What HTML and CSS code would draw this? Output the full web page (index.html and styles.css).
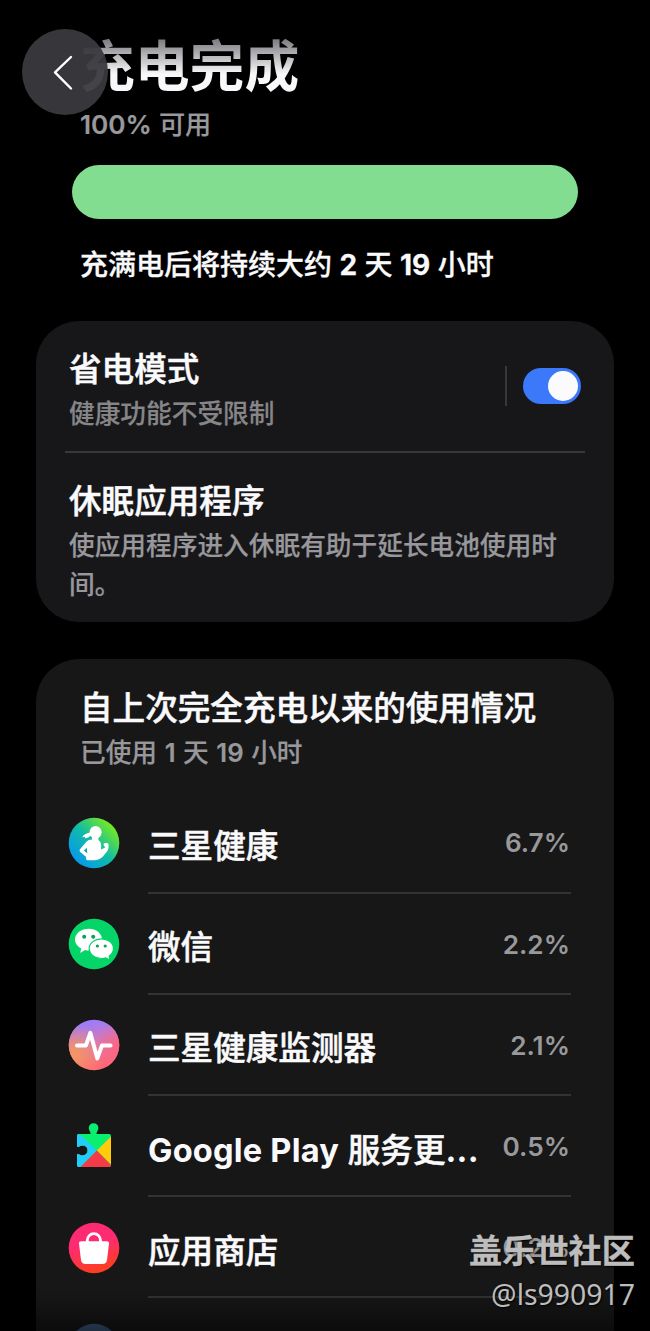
FILE: index.html
```
<!DOCTYPE html>
<html lang="zh-CN">
<head>
    <meta charset="UTF-8">
    <meta name="viewport" content="width=device-width, initial-scale=1.0">
    <title>电池</title>
    <link rel="stylesheet" href="styles.css">
</head>
<body>
    <div class="screen">
        <button class="back" aria-label="返回">
            <svg width="86" height="86" viewBox="0 0 86 86"><path d="M49 28 L33 43.3 L49 59.5" fill="none" stroke="#fff" stroke-width="2.4" stroke-linecap="round" stroke-linejoin="round"/></svg>
        </button>

        <header class="head">
            <h1>充电完成</h1>
            <p class="percent"><b>100%</b> 可用</p>
            <div class="battery"></div>
            <p class="remain">充满电后将持续大约 <b>2</b> 天 <b>19</b> 小时</p>
        </header>

        <section class="card modes">
            <div class="mode">
                <div class="mode_text">
                    <h2>省电模式</h2>
                    <p class="dim">健康功能不受限制</p>
                </div>
                <div class="switch_box"><span class="switch"></span></div>
            </div>
            <div class="mode sleep">
                <div class="mode_text">
                    <h2>休眠应用程序</h2>
                    <p>使应用程序进入休眠有助于延长电池使用时间。</p>
                </div>
            </div>
        </section>

        <section class="card usage">
            <div class="usage_head">
                <h2>自上次完全充电以来的使用情况</h2>
                <p>已使用 <b>1</b> 天 <b>19</b> 小时</p>
            </div>
            <ul>
                <li>
                    <!-- 三星健康 -->
                    <svg class="icon" viewBox="0 0 52 52">
                        <defs><linearGradient id="g1" x1="0.1" y1="0.85" x2="0.85" y2="0.1"><stop offset="0" stop-color="#0797f0"/><stop offset="0.5" stop-color="#10bca6"/><stop offset="1" stop-color="#7ced18"/></linearGradient></defs>
                        <circle cx="26" cy="26" r="25.3" fill="url(#g1)"/>
                        <g fill="#fff">
                            <ellipse cx="27.6" cy="15.3" rx="6" ry="6.4"/>
                            <path d="M14.2 20.2 Q16.5 15.8 23 15.4 L23 18.6 Q20 21.6 16.8 21.2 L17.2 19.8 Z"/>
                            <path d="M24 20 H30.4 V23 Q33 24.4 33.2 28 L33 32.6 L37.2 30.6 L35.4 27.6 Q36 25.6 38 26 Q40.6 25.6 40.6 28 Q41 31.8 39.4 34 L35 39.5 Q31.4 43.2 26 43.2 H19.8 Q17.4 43 18.2 40 L12 34.8 Q11 33.6 12 32.2 L18.6 24.4 Q20.4 22.6 24 22.6 Z"/>
                        </g>
                        <path fill="#0fa4c0" d="M15.8 33.4 L18.8 30.8 L19.3 36.4 Z"/>
                    </svg>
                    <div class="row"><span class="name">三星健康</span><span class="num">6.7%</span></div>
                </li>
                <li>
                    <!-- 微信 -->
                    <svg class="icon" viewBox="0 0 52 52">
                        <circle cx="26" cy="26" r="25.3" fill="#05d469"/>
                        <path fill="#fff" d="M20.8 10.7 C28.2 10.7 34 15.3 34 21.6 C34 28 28.2 32.5 20.8 32.5 Q18.7 32.5 17 32 L12.2 35 L13.2 30.6 C9.6 28.6 7 25.3 7 21.6 C7 15.3 13.2 10.7 20.8 10.7 Z"/>
                        <path fill="#fff" stroke="#05d469" stroke-width="1.2" d="M33.4 20.8 C40.2 20.8 45.5 25 45.5 30.6 C45.5 33.7 43.7 36.2 41.2 38 L41.7 42 L37.8 39.9 Q35.8 40.5 33.4 40.5 C26.8 40.5 21.2 36.2 21.2 30.6 C21.2 25 26.8 20.8 33.4 20.8 Z"/>
                        <g fill="#0aa35b"><circle cx="16.2" cy="18.8" r="2"/><circle cx="25.2" cy="18.8" r="2"/><circle cx="29.4" cy="28" r="1.6"/><circle cx="37.2" cy="28" r="1.6"/></g>
                    </svg>
                    <div class="row"><span class="name">微信</span><span class="num">2.2%</span></div>
                </li>
                <li>
                    <!-- 三星健康监测器 -->
                    <svg class="icon" viewBox="0 0 52 52">
                        <defs>
                            <linearGradient id="g2" x1="0.4" y1="0" x2="0.6" y2="1"><stop offset="0" stop-color="#987cff"/><stop offset="0.5" stop-color="#d979b4"/><stop offset="0.9" stop-color="#ff6777"/></linearGradient>
                            <radialGradient id="g3" cx="0.1" cy="0.7" r="0.6"><stop offset="0" stop-color="#f5985e"/><stop offset="1" stop-color="#f5985e" stop-opacity="0"/></radialGradient>
                            <radialGradient id="g4" cx="1" cy="0.55" r="0.5"><stop offset="0" stop-color="#fb6480"/><stop offset="1" stop-color="#fb6480" stop-opacity="0"/></radialGradient>
                        </defs>
                        <circle cx="26" cy="26" r="25.3" fill="url(#g2)"/>
                        <circle cx="26" cy="26" r="25.3" fill="url(#g3)"/>
                        <circle cx="26" cy="26" r="25.3" fill="url(#g4)"/>
                        <path d="M9 26.4 H18 L22.3 13.8 L29.3 39.4 L34 26.4 H42.6" fill="none" stroke="#fff" stroke-width="4" stroke-linecap="round" stroke-linejoin="round"/>
                    </svg>
                    <div class="row"><span class="name">三星健康监测器</span><span class="num">2.1%</span></div>
                </li>
                <li>
                    <!-- Google Play 服务 -->
                    <svg class="icon" viewBox="0 0 52 52">
                        <defs><clipPath id="puzzle"><path d="M11 13 H22.4 C23.4 11.5 20.8 10 20.8 7 A4.8 4.8 0 0 1 30.4 7 C30.4 10 27.8 11.5 28.8 13 H41 Q43 13 43 15 V44 Q43 46 41 46 H11 Q9 46 9 44 V33.2 C10.8 32.4 11.7 34.4 14.6 34.4 A5 5 0 0 0 14.6 24.4 C11.7 24.4 10.8 26.4 9 25.6 V15 Q9 13 11 13 Z"/></clipPath></defs>
                        <g clip-path="url(#puzzle)">
                            <rect x="8" y="2" width="36" height="45" fill="#0bef70"/>
                            <path d="M11.5 13 L28.9 29.5 L11.5 47 H8 V13 Z" fill="#22ccfb"/>
                            <path d="M44 14.5 L28.9 29.5 L44 44.5 Z" fill="#ffcb0a"/>
                            <path d="M28.9 29.5 L11.5 47 H46 Z" fill="#f63b48"/>
                        </g>
                    </svg>
                    <div class="row"><span class="name"><b>Google Play</b> 服务更<b>...</b></span><span class="num">0.5%</span></div>
                </li>
                <li>
                    <!-- 应用商店 -->
                    <svg class="icon" viewBox="0 0 52 52">
                        <defs><linearGradient id="g5" x1="0.35" y1="0" x2="0.65" y2="1"><stop offset="0.4" stop-color="#ff2b72"/><stop offset="1" stop-color="#fb4017"/></linearGradient></defs>
                        <circle cx="26" cy="26" r="25.3" fill="url(#g5)"/>
                        <path d="M19.3 21 V18.3 A6.6 6.6 0 0 1 32.5 18.3 V21" fill="none" stroke="#fff" stroke-width="2.8"/>
                        <path d="M13.2 19.2 H38.8 Q41.2 19.2 41 21.6 L39 38 Q38.4 41.9 34.5 41.9 H17.5 Q13.6 41.9 13 38 L11 21.6 Q10.8 19.2 13.2 19.2 Z" fill="#fff"/>
                    </svg>
                    <div class="row"><span class="name">应用商店</span><span class="num">0.2%</span></div>
                </li>
                <li>
                    <svg class="icon" viewBox="0 0 52 52"><circle cx="26" cy="26" r="25.3" fill="#3c5a80"/></svg>
                    <div class="row"></div>
                </li>
            </ul>
        </section>

        <div class="fade"></div>
        <div class="mark">
            <strong>盖乐世社区</strong>
            <span>@ls990917</span>
        </div>
    </div>
</body>
</html>
```
FILE: styles.css
```
* {
    box-sizing: border-box;
    margin: 0;
    padding: 0;
}
body {
    background-color: #000;
    color: #fafafc;
    font-family: Inter, "Noto Sans CJK SC", sans-serif;
}
b {
    font-weight: 700;
}
.screen {
    position: relative;
    width: 650px;
    height: 1331px;
    overflow: hidden;
}
.back {
    position: absolute;
    left: 22px;
    top: 29px;
    z-index: 2;
    width: 86px;
    height: 86px;
    border: 0;
    border-radius: 50%;
    background-color: rgba(58, 57, 61, 0.95);
}
.back svg {
    display: block;
}
.head {
    height: 321px;
    padding: 34px 72px 0;
}
.head h1 {
    height: 64px;
    padding-left: 8px;
    font-size: 54.8px;
    line-height: 64px;
    font-weight: 700;
    /* 顶部渐隐 */
    background: linear-gradient(#77777c 4px, #f8f8fa 40px);
    -webkit-background-clip: text;
    background-clip: text;
    color: transparent;
}
.percent {
    height: 67px;
    padding-left: 8px;
    color: #99989d;
    font-size: 26.2px;
    line-height: 54px;
    font-weight: 500;
    -webkit-text-stroke: 0.2px;
}
.percent b, .usage_head b {
    font-weight: 600;
}
.battery {
    height: 54px;
    border-radius: 27px;
    background-color: #82dd91;
}
.remain {
    padding: 26px 0 0 8px;
    font-size: 28px;
    line-height: 40px;
    font-weight: 500;
    white-space: nowrap;
    -webkit-text-stroke: 0.3px;
}
.card {
    width: 578px;
    margin: 0 auto;
    border-radius: 43px;
    background-color: #17171a;
}
h2 {
    font-size: 32.6px;
    line-height: 48px;
    font-weight: 500;
    white-space: nowrap;
    -webkit-text-stroke: 0.5px;
}
.card p {
    padding-top: 1px;
    color: #98979b;
    font-size: 25.7px;
    line-height: 39px;
    font-weight: 500;
    -webkit-text-stroke: 0.2px;
}
.card p.dim {
    color: #868688;
}
.modes {
    height: 301px;
    padding: 0 29px;
}
.mode {
    display: flex;
    justify-content: space-between;
    align-items: center;
    height: 130px;
    padding: 0 4px;
}
.mode_text {
    padding-top: 5px;
}
.sleep {
    height: 171px;
    border-top: 2px solid #38373c;
}
.sleep .mode_text {
    padding-top: 6px;
}
.switch_box {
    display: flex;
    align-items: center;
    height: 40px;
    padding-left: 16px;
    border-left: 2px solid #38383b;
}
.switch {
    width: 58px;
    height: 36px;
    padding: 3px;
    border-radius: 18px;
    background-color: #3c78fa;
}
.switch::after {
    content: "";
    display: block;
    width: 30px;
    height: 30px;
    margin-left: 22px;
    border-radius: 50%;
    background-color: #fbfbfe;
}
.usage {
    height: 720px;
    margin-top: 37px;
    background-color: #171717;
}
.usage_head {
    height: 133.4px;
    padding: 25px 44px 0;
}
.usage_head p {
    word-spacing: 0.7px;
}
.usage li {
    display: flex;
    align-items: center;
    height: 101.2px;
    padding: 0 43px 0 32px;
    list-style: none;
}
.icon {
    flex: none;
    width: 52px;
    height: 52px;
}
.row {
    display: flex;
    flex: 1;
    justify-content: space-between;
    align-items: center;
    height: 101.2px;
    margin-left: 28px;
    border-bottom: 2px solid #333;
}
.name {
    padding-top: 8px;
    font-size: 32.6px;
    line-height: 48px;
    font-weight: 500;
    white-space: nowrap;
    -webkit-text-stroke: 0.5px;
}
.name b {
    letter-spacing: 0.2px;
    -webkit-text-stroke: 0;
}
.num {
    padding: 2px 1px 0 0;
    color: #99999c;
    font-size: 26.2px;
    font-weight: 600;
}
.fade {
    position: absolute;
    left: 0;
    bottom: 0;
    width: 650px;
    height: 40px;
    background: linear-gradient(transparent, rgba(0, 0, 0, 0.5));
}
.mark {
    position: absolute;
    right: 15px;
    bottom: 16px;
    display: flex;
    flex-direction: column;
    align-items: flex-end;
    color: #bdbdbd;
    font-family: "Noto Sans", "Noto Sans CJK SC", sans-serif;
    text-shadow: 1px 1px 2px #000;
}
.mark strong {
    font-size: 33.2px;
    line-height: 45px;
    -webkit-text-stroke: 0.4px;
}
.mark span {
    font-size: 28.4px;
    line-height: 42px;
}
```
